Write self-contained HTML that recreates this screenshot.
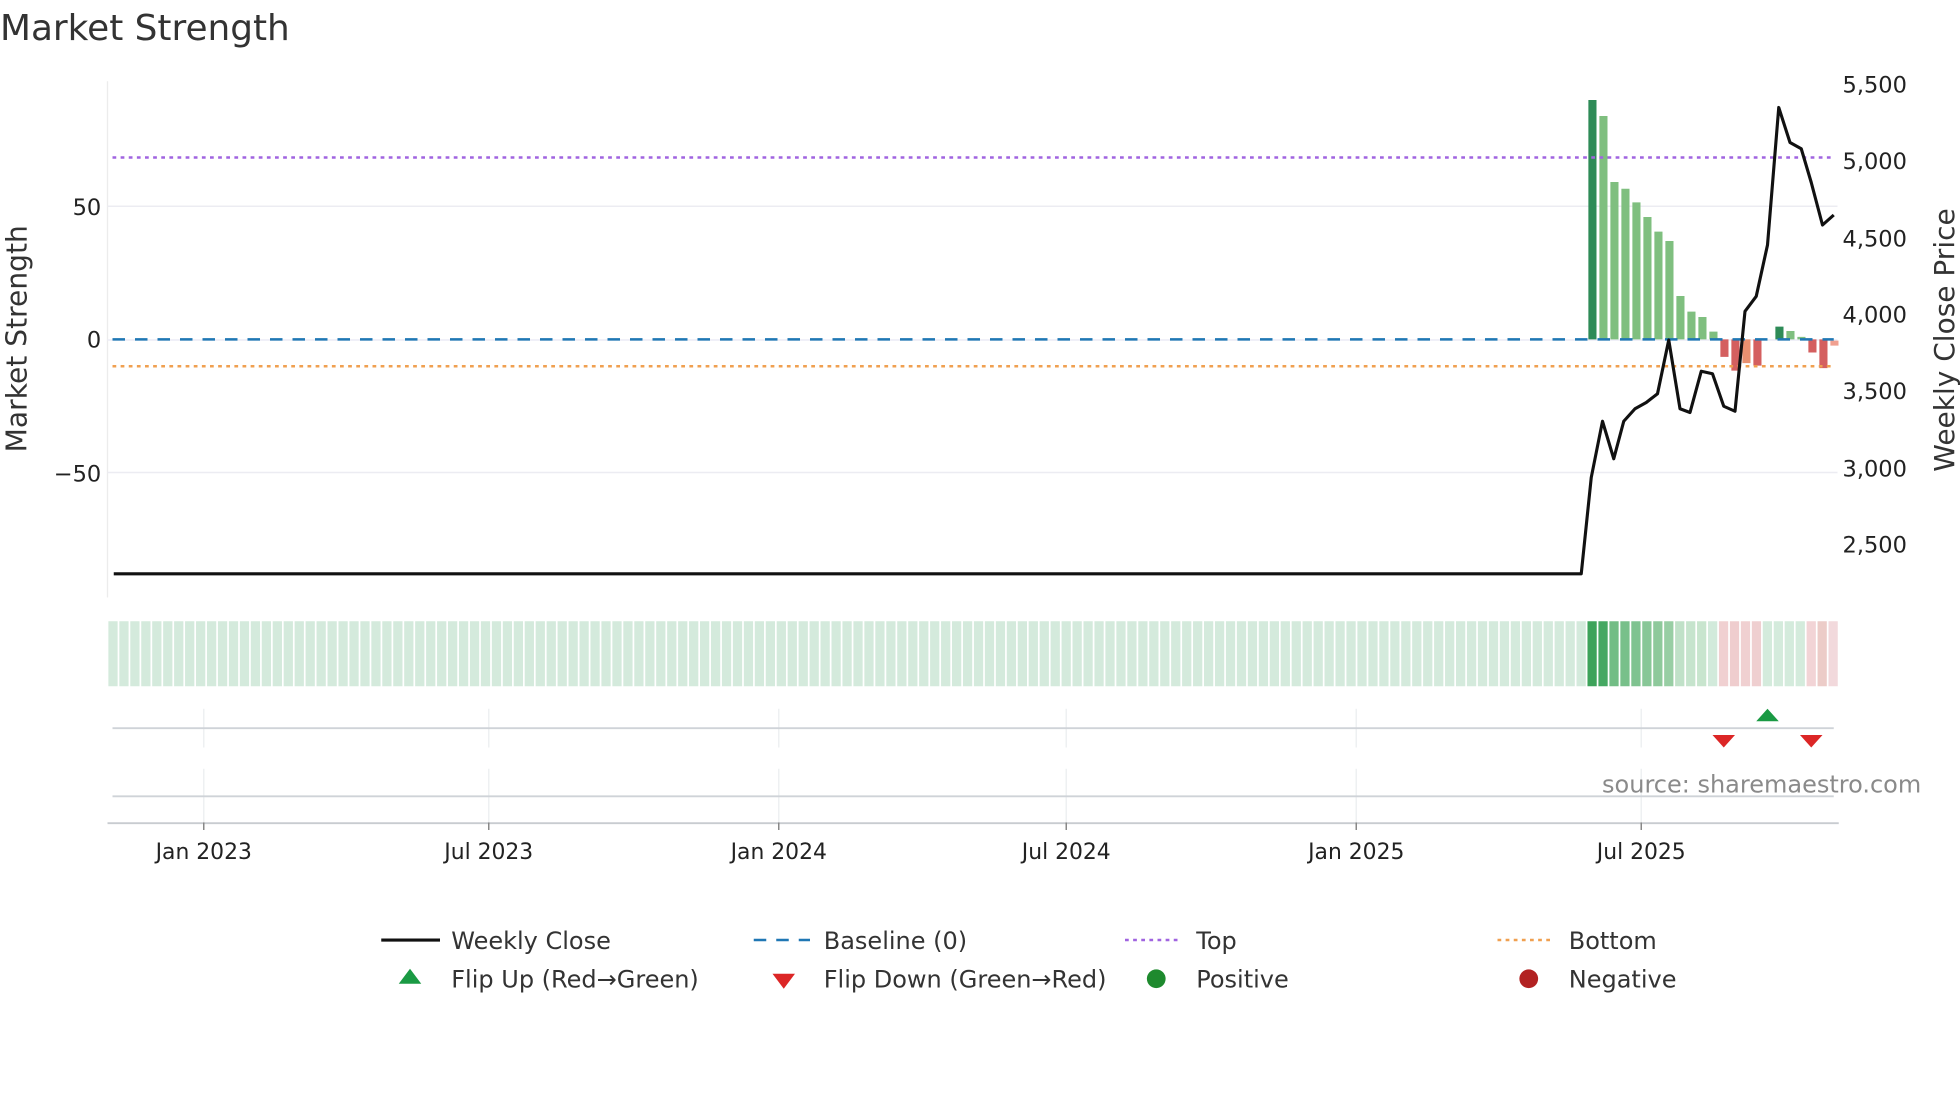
<!DOCTYPE html>
<html><head><meta charset="utf-8"><style>
html,body{margin:0;padding:0;background:#fff;}
svg{display:block;font-family:"DejaVu Sans","Liberation Sans",sans-serif;}
</style></head><body>
<svg id="s" width="1960" height="1102" viewBox="0 0 1568 881.6" xmlns="http://www.w3.org/2000/svg">
<text x="0" y="32" font-size="28.7" fill="#333">Market Strength</text>
<line x1="86" y1="65" x2="86" y2="478" stroke="#ececec" stroke-width="1"/>
<line x1="86" y1="165" x2="1470" y2="165" stroke="#ececf2" stroke-width="1.2"/>
<line x1="86" y1="378" x2="1470" y2="378" stroke="#ececf2" stroke-width="1.2"/>
<line x1="86" y1="272" x2="1470" y2="272" stroke="#ececf6" stroke-width="1.2"/>
<text x="81" y="172" font-size="18" fill="#222" text-anchor="end">50</text>
<text x="81" y="278" font-size="18" fill="#222" text-anchor="end">0</text>
<text x="81" y="385" font-size="18" fill="#222" text-anchor="end">−50</text>
<text transform="translate(21,271) rotate(-90)" font-size="22.5" fill="#333" text-anchor="middle">Market Strength</text>
<g font-size="18" fill="#222">
<text x="1474" y="74">5,500</text><text x="1474" y="135">5,000</text><text x="1474" y="197">4,500</text>
<text x="1474" y="258">4,000</text><text x="1474" y="319">3,500</text><text x="1474" y="381">3,000</text><text x="1474" y="442">2,500</text>
</g>
<text transform="translate(1563,272) rotate(-90)" font-size="22.4" fill="#333" text-anchor="middle">Weekly Close Price</text>
<g id="bars"></g>
<line x1="90" y1="126" x2="1467" y2="126" stroke="#a064e0" stroke-width="2" stroke-dasharray="3,3.5"/>
<line x1="90" y1="293" x2="1467" y2="293" stroke="#f0a050" stroke-width="2" stroke-dasharray="3,3.5"/>
<line x1="90" y1="271.5" x2="1467" y2="271.5" stroke="#1f77b4" stroke-width="2" stroke-dasharray="10,8"/>
<polyline fill="none" stroke="#111" stroke-width="2.5" stroke-linejoin="round" points="91,459 1265,459 1273,382 1282,337 1291,367 1299,337 1308,327 1317,322 1326,315 1335,272 1344,327 1352,330 1361,297 1370,299 1379,325 1388,329 1396,249 1405,237 1414,196 1423,86 1432,114 1441,119 1449,146 1458,180 1467,172"/>
<g id="heat"></g>
<g stroke="#eef0f2" stroke-width="1.2">
<line x1="163" y1="567" x2="163" y2="598"/><line x1="391" y1="567" x2="391" y2="598"/><line x1="623" y1="567" x2="623" y2="598"/><line x1="853" y1="567" x2="853" y2="598"/><line x1="1085" y1="567" x2="1085" y2="598"/><line x1="1313" y1="567" x2="1313" y2="598"/>
<line x1="163" y1="615" x2="163" y2="658"/><line x1="391" y1="615" x2="391" y2="658"/><line x1="623" y1="615" x2="623" y2="658"/><line x1="853" y1="615" x2="853" y2="658"/><line x1="1085" y1="615" x2="1085" y2="658"/><line x1="1313" y1="615" x2="1313" y2="658"/>
</g>
<line x1="90" y1="582.5" x2="1467" y2="582.5" stroke="#cfd3d8" stroke-width="1.5"/>
<line x1="90" y1="637" x2="1467" y2="637" stroke="#cfd3d8" stroke-width="1.5"/>
<line x1="86" y1="658.5" x2="1471" y2="658.5" stroke="#c8ccd0" stroke-width="1.5"/>
<g stroke="#888" stroke-width="1.2">
<line x1="163" y1="658" x2="163" y2="664"/><line x1="391" y1="658" x2="391" y2="664"/><line x1="623" y1="658" x2="623" y2="664"/><line x1="853" y1="658" x2="853" y2="664"/><line x1="1085" y1="658" x2="1085" y2="664"/><line x1="1313" y1="658" x2="1313" y2="664"/>
</g>
<polygon points="1405,577 1423,577 1414,567" fill="#1a9a44"/>
<polygon points="1370,588 1388,588 1379,598" fill="#dc2626"/>
<polygon points="1440,588 1458,588 1449,598" fill="#dc2626"/>
<text x="1537" y="634" font-size="19.2" fill="#8a8a8a" text-anchor="end">source: sharemaestro.com</text>
<g font-size="17.5" fill="#222" text-anchor="middle">
<text x="163" y="687">Jan 2023</text><text x="391" y="687">Jul 2023</text><text x="623" y="687">Jan 2024</text><text x="853" y="687">Jul 2024</text><text x="1085" y="687">Jan 2025</text><text x="1313" y="687">Jul 2025</text>
</g>
<g font-size="19.2" fill="#333">
<line x1="305" y1="752" x2="352" y2="752" stroke="#111" stroke-width="2.5"/>
<text x="361" y="759">Weekly Close</text>
<line x1="603" y1="752" x2="648" y2="752" stroke="#1f77b4" stroke-width="2" stroke-dasharray="10,8"/>
<text x="659" y="759">Baseline (0)</text>
<line x1="900" y1="752" x2="945" y2="752" stroke="#a064e0" stroke-width="2" stroke-dasharray="3,3.5"/>
<text x="957" y="759">Top</text>
<line x1="1198" y1="752" x2="1243" y2="752" stroke="#f0a050" stroke-width="2" stroke-dasharray="3,3.5"/>
<text x="1255" y="759">Bottom</text>
<polygon points="319,787 337,787 328,775" fill="#1a9a44"/>
<text x="361" y="790">Flip Up (Red→Green)</text>
<polygon points="618,779 636,779 627,791" fill="#dc2626"/>
<text x="659" y="790">Flip Down (Green→Red)</text>
<circle cx="925" cy="783" r="7.5" fill="#1e8a2e"/>
<text x="957" y="790">Positive</text>
<circle cx="1223" cy="783" r="7.5" fill="#b22222"/>
<text x="1255" y="790">Negative</text>
</g>
</svg>
<script>
var NS="http://www.w3.org/2000/svg";
function r(g,x,y,w,h,c){var e=document.createElementNS(NS,"rect");e.setAttribute("x",x);e.setAttribute("y",y);e.setAttribute("width",w);e.setAttribute("height",h);e.setAttribute("fill",c);document.getElementById(g).appendChild(e);}
var tops=[80,92.8,145.6,151,161.9,173.6,185.3,192.8,236.8,249.3,253.6,265.3];
for(var i=0;i<tops.length;i++){r("bars",1270.7+i*8.8,tops[i],6.5,271.5-tops[i],i==0?"#2e8b57":"#7fbf7f");}
r("bars",1270.7+12*8.8,271.5,6.5,14,"#d45f5f");
r("bars",1270.7+13*8.8,271.5,6.5,25,"#d45f5f");
r("bars",1270.7+14*8.8,271.5,6.5,19,"#e89070");
r("bars",1270.7+15*8.8,271.5,6.5,21,"#d45f5f");
r("bars",1270.7+17*8.8,261.3,6.5,10.2,"#2e8b57");
r("bars",1270.7+18*8.8,264.8,6.5,6.7,"#7fbf7f");
r("bars",1270.7+19*8.8,269.5,6.5,2,"#7fbf7f");
r("bars",1270.7+20*8.8,271.5,6.5,10.5,"#d45f5f");
r("bars",1270.7+21*8.8,271.5,6.5,23,"#d45f5f");
r("bars",1270.7+22*8.8,272.5,6.5,4,"#f0a090");
var hc=["#3da35a","#45a862","#72bd85","#78c08a","#7fc390","#88c797","#8ec99b","#98cea4","#c0e1c8","#c6e4cd","#c8e5ce","#d2eadb","#f0d0d1","#efcdce","#f0d0d1","#efcfd0","#d4ebdc","#d4ebdc","#d4ebdc","#d4ebdc","#f2d4d6","#ecccc8","#f2d9dc"];
for(var k=0;k<158;k++){var c=k<135?"#d4eadc":hc[k-135];r("heat",86.7+k*8.765,497,7.4,52,c);}
</script>
</body></html>
